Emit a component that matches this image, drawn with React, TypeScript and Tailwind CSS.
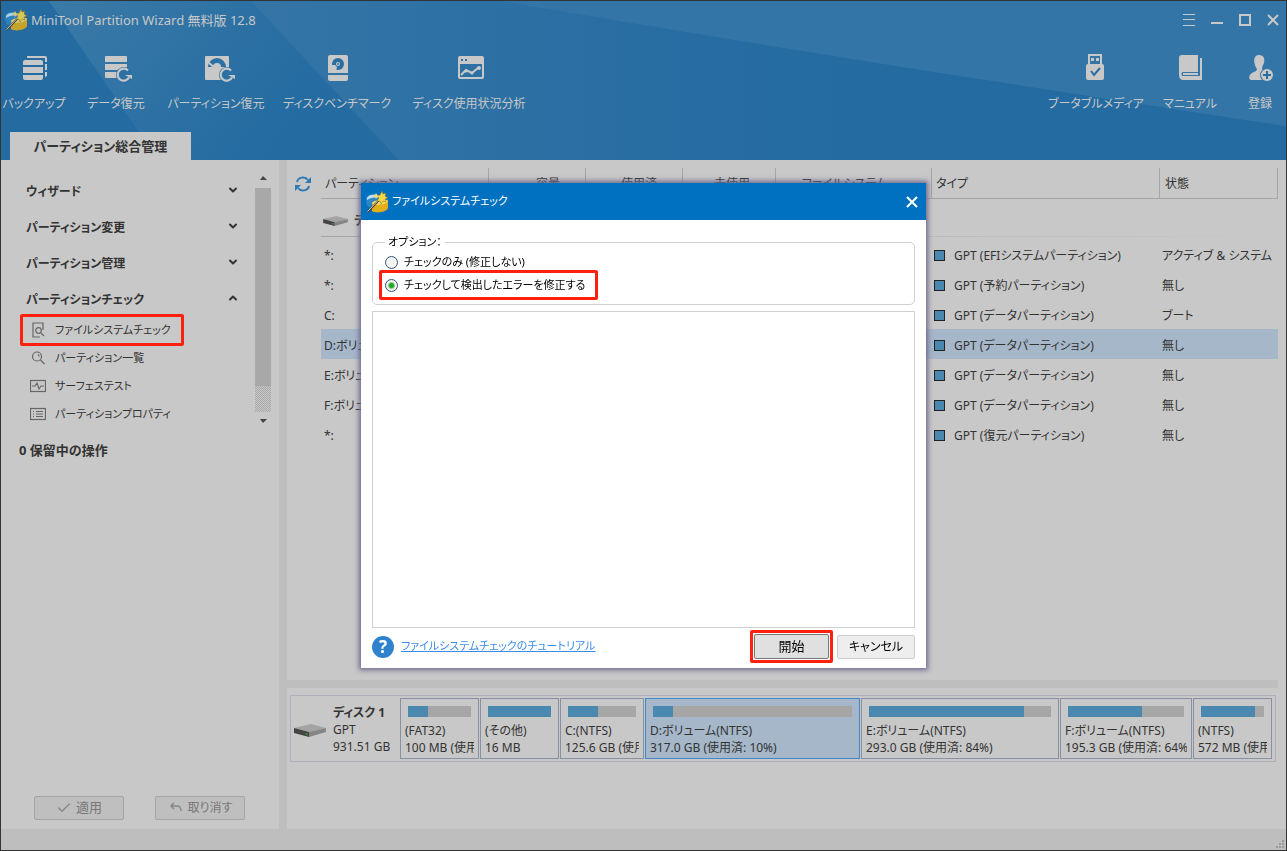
import { useState } from "react";
import type { ReactNode } from "react";
import { Check, ChevronDown, ChevronUp } from "lucide-react";

function AppLogo({ className = "" }: { className?: string }) {
  return (
    <svg viewBox="0 0 22 22" className={`w-[22px] h-[22px] shrink-0 ${className}`}>
      <path d="M0 8c0-4 5-6 11-5l2 3-3 8-7 2C1 15 0 12 0 8z" fill="#2f86c6" />
      <path d="M1 7c1-3 6-4 10-3l1 3C8 6 4 7 1 9z" fill="#c3e2ee" />
      <path d="M6 12c0-2 15-5 16-2v7c-1 4-12 6-16 3z" fill="#e3ae18" />
      <path d="M6 12c2-3 14-5 16-2-1 3-13 6-16 2z" fill="#f6da62" />
      <path d="M1.500 21L13 9" stroke="#4d4433" strokeWidth="2" />
      <path d="M1.500 20.500L12.500 9" stroke="#e6dfc6" strokeWidth="0.900" />
      <path d="M16 0l1 3 3-1-1 3 3 2-3 1 1 3-3-1-2 3-1-3-3 0 2-3-2-2 3-1z" fill="#f7d848" stroke="#8a6c18" strokeWidth="0.500" />
      <path d="M10 2l1 2 2 1-2 1-1 2-1-2-2-1 2-1z" fill="#f3dc74" />
    </svg>
  );
}

function DiskIcon({ className }: { className: string }) {
  return (
    <svg viewBox="0 0 32 13" className={className}>
      <path d="M0 4L17 0l15 4-17 4z" fill="#a3a3a3" />
      <path d="M0 4l15 4v5L0 9z" fill="#444" />
      <path d="M15 8l17-4v4l-17 5z" fill="#858585" />
      <circle cx="12.500" cy="10" r="1" fill="#35b035" />
    </svg>
  );
}

const icons: Record<string, ReactNode> = {
  backup: (
    <>
      <path d="M4 2h18a2 2 0 0 1 2 2v4h-2V4H4zM22 10h2v6h-2zM22 18h2v4l-2 1z" />
      <path d="M2 6h16a2 2 0 0 1 2 2v3H0V8a2 2 0 0 1 2-2zM0 13h20v6H0zM0 21h20v3a2 2 0 0 1-2 2H2a2 2 0 0 1-2-2z" />
    </>
  ),
  data: (
    <>
      <path d="M0 3a1 1 0 0 1 1-1h20a1 1 0 0 1 1 1v5H0zM0 10h22v6H0zM0 18h14v6H1a1 1 0 0 1-1-1z" />
      <circle cx="19" cy="21" r="8" fill="#2c70a4" />
      <path d="M23 16.500a6 6 0 1 0 1 7" fill="none" stroke="currentColor" strokeWidth="2.200" />
      <path d="M20 21h7v4z" />
    </>
  ),
  partition: (
    <>
      <path d="M1 2h22a1 1 0 0 1 1 1v23H1a1 1 0 0 1-1-1V3a1 1 0 0 1 1-1z" />
      <path d="M3 13a9 9 0 0 1 18 0h-5a4 4 0 0 0-8 0z" fill="#2c70a4" />
      <path d="M4 9l6 5" stroke="currentColor" strokeWidth="2" />
      <circle cx="12" cy="12" r="2" />
      <circle cx="22" cy="21" r="8" fill="#2c70a4" />
      <path d="M26 16.500a6 6 0 1 0 1 7" fill="none" stroke="currentColor" strokeWidth="2.200" />
      <path d="M23 21h7v4z" />
    </>
  ),
  benchmark: (
    <>
      <path d="M4 1h16a2 2 0 0 1 2 2v16H2V3a2 2 0 0 1 2-2zM2 21h20v4a2 2 0 0 1-2 2H4a2 2 0 0 1-2-2z" />
      <circle cx="12" cy="10" r="6" fill="#286ea3" />
      <path d="M5 11h4l2 2-1 4H5z" />
      <circle cx="12" cy="10" r="2" />
      <circle cx="12" cy="10" r="0.900" fill="#286ea3" />
    </>
  ),
  usage: (
    <>
      <path fillRule="evenodd" d="M2 2h22a2 2 0 0 1 2 2v19a2 2 0 0 1-2 2H2a2 2 0 0 1-2-2V4a2 2 0 0 1 2-2zM2 10v13h22V10zM3 5v2h2V5zM7 5v2h2V5z" />
      <path d="M3 21l5-5 6 3 7-6" fill="none" stroke="currentColor" strokeWidth="2" />
      <circle cx="8" cy="17" r="1.500" />
      <circle cx="14" cy="19" r="1.500" />
      <circle cx="21" cy="14" r="2" />
    </>
  ),
  usb: (
    <>
      <path fillRule="evenodd" d="M3 0h14v10H3zM5 2v8h10V2zM6 4h3v3H6zM11 4h3v3h-3z" />
      <path d="M3 10h14a2 2 0 0 1 2 2v12a2 2 0 0 1-2 2H3a2 2 0 0 1-2-2V12a2 2 0 0 1 2-2z" />
      <path d="M6 17l3 4 6-7" fill="none" stroke="#286ea3" strokeWidth="2" />
    </>
  ),
  manual: (
    <>
      <path fillRule="evenodd" d="M3 1h16v17H4c-2 0-2 4 0 4h17V4h2v22H4c-2 0-4-2-4-4V4c0-2 1-3 3-3z" />
      <path d="M4 19h15v2H4z" />
    </>
  ),
  register: (
    <>
      <path d="M10 1c5 0 6 4 5 8-1 2-2 4-2 6l2 2c-3 2-3 6-1 9H2c-3-1-2-5 1-7 2-1 5-2 5-4-3-4-5-14 2-14z" />
      <circle cx="18" cy="21" r="7" fill="#3275a7" />
      <circle cx="18" cy="21" r="6" />
      <path d="M14 21h8M18 17v8" stroke="#286ea3" strokeWidth="2" />
    </>
  ),
};

const leftTools = [
  { icon: "backup", label: "バックアップ", width: "w-[58px]" },
  { icon: "data", label: "データ復元", width: "w-[58px]" },
  { icon: "partition", label: "パーティション復元", width: "w-[94px]" },
  { icon: "benchmark", label: "ディスクベンチマーク", width: "w-[100px]" },
  { icon: "usage", label: "ディスク使用状況分析", width: "w-[116px]" },
];

const rightTools = [
  { icon: "usb", label: "ブータブルメディア", width: "w-[90px]" },
  { icon: "manual", label: "マニュアル", width: "w-[50px]" },
  { icon: "register", label: "登録", width: "w-[42px]" },
];

function ToolButton({ icon, label, width }: { icon: string; label: string; width: string }) {
  return (
    <button className={`${width} flex flex-col items-center gap-3 text-[#c8c8c8]`}>
      <svg viewBox="-3 0 28 28" fill="currentColor" className="w-7 h-7 overflow-visible">
        {icons[icon]}
      </svg>
      <span className="text-[12px] leading-5 whitespace-nowrap">{label}</span>
    </button>
  );
}

const windowButtons = [
  { label: "メニュー", d: "M0 0.500h12M0 5.500h12M0 11.500h12", stroke: 1 },
  { label: "最小化", d: "M0 9h12", stroke: 2 },
  { label: "最大化", d: "M1 1h10v10H1z", stroke: 2 },
  { label: "閉じる", d: "M1 1l10 10M11 1L1 11", stroke: 2 },
];

function Header() {
  return (
    <header className="relative bg-[#236ba1] text-[#c8c8c8]">
      <svg viewBox="0 0 1285 160" preserveAspectRatio="none" className="absolute inset-0 w-full h-full">
        <defs>
          <linearGradient id="beam" x1="0" y1="0" x2="1" y2="0.400">
            <stop offset="0" stopColor="#4581aa" stopOpacity="0.700" />
            <stop offset="0.600" stopColor="#3073a5" stopOpacity="0.600" />
            <stop offset="1" stopColor="#236ba1" stopOpacity="0" />
          </linearGradient>
          <linearGradient id="sheet" x1="0" y1="0" x2="1" y2="0">
            <stop offset="0" stopColor="#3c79a8" stopOpacity="0.700" />
            <stop offset="0.500" stopColor="#2d70a4" stopOpacity="0.600" />
            <stop offset="1" stopColor="#236ba1" stopOpacity="0" />
          </linearGradient>
        </defs>
        <path d="M48 0H250L398 160H157Z" fill="url(#beam)" />
        <path d="M250 0H1000L900 160H398Z" fill="url(#sheet)" />
        <path d="M500 0Q850 60 1285 126V0Z" fill="#3375a7" />
      </svg>
      <div className="relative">
        <div className="flex items-center justify-between h-[38px] pl-1 pr-[7px]">
          <div className="flex items-center gap-1">
            <AppLogo className="opacity-85" />
            <h1 className="text-[13px] leading-5">MiniTool Partition Wizard 無料版 12.8</h1>
          </div>
          <div className="flex items-center gap-4">
            {windowButtons.map((b) => (
              <button key={b.label} aria-label={b.label} className="w-3 h-3">
                <svg viewBox="0 0 12 12" fill="none" stroke="currentColor" strokeWidth={b.stroke} className="w-3 h-3"><path d={b.d} /></svg>
              </button>
            ))}
          </div>
        </div>
        <div className="flex justify-between pt-[15px] pl-1 pr-[5px] pb-[18px]">
          <div className="flex gap-6">
            {leftTools.map((t) => <ToolButton key={t.icon} {...t} />)}
          </div>
          <div className="flex gap-6">
            {rightTools.map((t) => <ToolButton key={t.icon} {...t} />)}
          </div>
        </div>
        <div className="pl-[9px]">
          <div className="inline-flex items-center justify-center w-[181px] h-7 pt-[2px] bg-[#c8c8c8] text-[#333] text-[13px] font-bold align-bottom">
            パーティション総合管理
          </div>
        </div>
      </div>
    </header>
  );
}

const sideIcons: Record<string, ReactNode> = {
  fs: (
    <>
      <path d="M13 8V1H3v14h7" />
      <circle cx="8.500" cy="8.500" r="2.800" />
      <path d="M11 11l3 3" />
    </>
  ),
  list: (
    <>
      <circle cx="7" cy="6.500" r="4.500" />
      <path d="M10.500 10l4 4M8 4.500a2 2 0 0 1 1 2" />
    </>
  ),
  surface: (
    <>
      <rect x="0.500" y="2.500" width="15" height="11" />
      <path d="M2 8h3l2-3 2 6 2-3h3" />
    </>
  ),
  props: (
    <>
      <rect x="0.500" y="2.500" width="15" height="11" />
      <path d="M3 5.500h1M6 5.500h7M3 8h1M6 8h7M3 10.500h1M6 10.500h7" />
    </>
  ),
};

const checkItems = [
  { icon: "fs", label: "ファイルシステムチェック", marked: true },
  { icon: "list", label: "パーティション一覧" },
  { icon: "surface", label: "サーフェステスト" },
  { icon: "props", label: "パーティションプロパティ" },
];

function Sidebar() {
  return (
    <aside className="w-[278px] shrink-0 flex flex-col pt-3 pb-[9px] text-[#333]">
      <div className="flex pr-2">
        <nav className="flex-1 pl-[19px]">
          {["ウィザード", "パーティション変更", "パーティション管理", "パーティションチェック"].map((s, i) => (
            <button key={s} className="w-full h-9 flex items-center justify-between pl-[6px] pr-4 text-[12px] font-bold">
              <span className="pt-1">{s}</span>
              {i === 3 ? <ChevronUp className="w-3 h-3" strokeWidth={4} /> : <ChevronDown className="w-3 h-3" strokeWidth={4} />}
            </button>
          ))}
          <ul>
            {checkItems.map((item) => (
              <li key={item.label} className="relative h-7">
                <a href="#" className="h-full flex items-center gap-[9px] pl-[10px] text-[11px]">
                  <svg viewBox="0 0 16 16" fill="none" stroke="#666" strokeWidth="1.200" className="w-4 h-4">{sideIcons[item.icon]}</svg>
                  {item.label}
                </a>
                {item.marked && <span className="absolute left-0 -inset-y-[2px] w-[164px] rounded-[2px] border-3 border-[#ff2010]" />}
              </li>
            ))}
          </ul>
        </nav>
        <div className="w-4 flex flex-col items-center justify-between">
          <svg viewBox="0 0 8 5" className="w-2 h-[5px] mt-[3px]"><path d="M1 5h7L4 1z" fill="#444" /></svg>
          <div className="w-full h-[224px] bg-[repeating-conic-gradient(#a8a8a8_0_25%,#c8c8c8_0_50%)] bg-[length:2px_2px]">
            <div className="w-full h-[198px] bg-[#a8a8a8]" />
          </div>
          <svg viewBox="0 0 8 5" className="w-2 h-[5px] mb-1"><path d="M1 0h7L4 4z" fill="#444" /></svg>
        </div>
      </div>
      <p className="pl-[18px] pt-3 text-[13px] leading-5 font-bold">0 保留中の操作</p>
      <div className="mt-auto flex gap-[31px] pl-[33px] text-[13px] text-[#777]">
        <button className="w-[90px] h-6 flex items-center justify-center gap-1 rounded-[2px] border border-[#a5a5a5] bg-[#bfbfbf]">
          <Check className="w-4 h-4 text-[#888]" strokeWidth={2} />
          適用
        </button>
        <button className="w-[90px] h-6 flex items-center justify-center gap-1 rounded-[2px] border border-[#a5a5a5] bg-[#bfbfbf] text-[12px]">
          <svg viewBox="0 0 16 16" fill="none" stroke="#888" strokeWidth="1.500" className="w-4 h-4"><path d="M6 3L3 6l3 3M3 6h6c3 0 4 2 4 5" /></svg>
          取り消す
        </button>
      </div>
    </aside>
  );
}

const partitions = [
  { name: "*:", type: "GPT (EFIシステムパーティション)", state: "アクティブ & システム" },
  { name: "*:", type: "GPT (予約パーティション)", state: "無し" },
  { name: "C:", type: "GPT (データパーティション)", state: "ブート" },
  { name: "D:ボリューム", type: "GPT (データパーティション)", state: "無し", selected: true },
  { name: "E:ボリューム", type: "GPT (データパーティション)", state: "無し" },
  { name: "F:ボリューム", type: "GPT (データパーティション)", state: "無し" },
  { name: "*:", type: "GPT (復元パーティション)", state: "無し" },
];

function RefreshIcon() {
  return (
    <svg viewBox="0 0 16 16" className="w-4 h-4" fill="none" stroke="#2f7ab4" strokeWidth="2">
      <path d="M2 6c1-5 8-6 11-2M14 10c-1 5-8 6-11 2" />
      <path d="M16 1v6h-6zM0 15V9h6z" fill="#2f7ab4" stroke="none" />
    </svg>
  );
}

function PartitionTable() {
  const th = "relative font-normal align-middle pt-[6px] after:absolute after:right-0 after:top-1 after:bottom-0 after:w-px after:bg-[#a5a5a5]";
  return (
    <div className="flex pl-2 pt-1 text-[#333]">
      <button aria-label="更新" className="w-[26px] h-4 mt-3"><RefreshIcon /></button>
      <table className="flex-1 w-full table-fixed border-collapse text-[12px] leading-5 mr-2">
        <colgroup>
          <col className="w-[168px]" />
          <col className="w-[97px]" />
          <col className="w-[97px]" />
          <col className="w-[93px]" />
          <col className="w-[156px]" />
          <col className="w-[228px]" />
          <col />
        </colgroup>
        <thead>
          <tr className="h-[34px] border-b border-[#a5a5a5]">
            <th className={`${th} text-left pl-1`}>パーティション</th>
            <th className={`${th} text-right pr-[26px]`}>容量</th>
            <th className={`${th} text-right pr-[26px]`}>使用済</th>
            <th className={`${th} text-right pr-[26px]`}>未使用</th>
            <th className={`${th} text-left pl-[26px]`}>ファイルシステム</th>
            <th className={`${th} text-left pl-1`}>タイプ</th>
            <th className={`${th} text-left pl-[5px]`}>状態</th>
          </tr>
        </thead>
        <tbody>
          <tr className="h-[41px]">
            <td colSpan={7} className="relative pl-[2px] pt-1 after:absolute after:inset-x-0 after:bottom-[2px] after:h-px after:bg-linear-to-r after:from-[#a5a5a5] after:to-[#c8c8c8]">
              <span className="flex items-center gap-[6px] font-bold"><DiskIcon className="w-[25px] h-[10px]" />ディスク 1</span>
            </td>
          </tr>
          {partitions.map((p, i) => (
            <tr key={i} className={p.selected ? "h-[30px] bg-[#a5b7c9]" : "h-[30px]"}>
              <td className="pl-[3px] pt-[3px]">{p.name}</td>
              <td /><td /><td /><td />
              <td className="pl-[2px] pt-[3px] whitespace-nowrap">
                <span className="flex items-center gap-[9px]"><i className="w-[11px] h-[11px] border border-[#222] bg-[#4a88b0]" />{p.type}</span>
              </td>
              <td className="pl-[2px] pt-[3px] whitespace-nowrap">{p.state}</td>
            </tr>
          ))}
        </tbody>
      </table>
    </div>
  );
}

const blocks = [
  { name: "(FAT32)", size: "100 MB (使用", used: 32 },
  { name: "(その他)", size: "16 MB", used: 100 },
  { name: "C:(NTFS)", size: "125.6 GB (使用", used: 44 },
  { name: "D:ボリューム(NTFS)", size: "317.0 GB (使用済: 10%)", used: 10, selected: true },
  { name: "E:ボリューム(NTFS)", size: "293.0 GB (使用済: 84%)", used: 85 },
  { name: "F:ボリューム(NTFS)", size: "195.3 GB (使用済: 64%", used: 64 },
  { name: "(NTFS)", size: "572 MB (使用", used: 86 },
];

function DiskMap() {
  return (
    <div className="ml-[3px] mr-[10px] mt-[7px] flex h-[67px] border border-[#adb0b8] text-[12px] leading-[17px] text-[#333]">
      <div className="w-[109px] shrink-0 flex items-center pl-[3px] gap-[7px]">
        <DiskIcon className="w-8 h-[13px] mt-1" />
        <div className="pt-[2px] whitespace-nowrap">
          <p className="font-bold">ディスク 1</p>
          <p>GPT</p>
          <p>931.51 GB</p>
        </div>
      </div>
      <div className="flex-1 min-w-0 grid grid-cols-[79fr_79fr_84fr_215fr_198fr_132fr_79fr] gap-px py-[2px] pr-[3px]">
        {blocks.map((b) => (
          <div
            key={b.name + b.size}
            className={`min-w-0 border px-1 pt-[7px] ${b.selected ? "border-[#4088c8] bg-[#a5b7c9]" : "border-[#8791a3]"}`}
          >
            <div className="mx-[3px] h-[11px] bg-[#a6a6a6]">
              <div className="h-full bg-[#4a88b0]" style={{ width: `${b.used}%` }} />
            </div>
            <p className="mt-[5px] overflow-hidden whitespace-nowrap">{b.name}</p>
            <p className="overflow-hidden whitespace-nowrap">{b.size}</p>
          </div>
        ))}
      </div>
    </div>
  );
}

function CheckDialog() {
  const [mode, setMode] = useState("fix");
  const radio = "appearance-none w-[13px] h-[13px] rounded-full border border-[#2c5578] bg-[#f4f4f0] checked:bg-[radial-gradient(circle,#22a822_0_2px,#f4f4f0_4px)]";
  return (
    <div className="fixed inset-0 flex items-center justify-center">
      <section role="dialog" aria-labelledby="dialog-title" className="w-[565px] bg-white text-black text-[11px] shadow-[0_0_5px_2px_#6c6a8c]">
        <div className="h-[37px] bg-[#0071c1] flex items-center pl-[5px] pr-2 gap-1 text-white">
          <AppLogo />
          <h2 id="dialog-title" className="flex-1">ファイルシステムチェック</h2>
          <button aria-label="閉じる" className="w-3 h-3">
            <svg viewBox="0 0 12 12" fill="none" stroke="currentColor" strokeWidth="2" className="w-3 h-3"><path d="M1 1l10 10M11 1L1 11" /></svg>
          </button>
        </div>
        <div className="px-[11px] pt-[12px] pb-[5px]">
          <fieldset className="h-[73px] rounded-[5px] border border-[#d0d0d0] pl-3 leading-5">
            <legend className="px-[3px] leading-5">オプション：</legend>
            <label className="flex items-center gap-[6px] h-5">
              <input type="radio" name="mode" className={radio} checked={mode === "check"} onChange={() => setMode("check")} />
              チェックのみ (修正しない)
            </label>
            <label className="relative flex items-center gap-[6px] h-[26px]">
              <input type="radio" name="mode" className={radio} checked={mode === "fix"} onChange={() => setMode("fix")} />
              チェックして検出したエラーを修正する
              <span className="absolute -left-[6px] -inset-y-[2px] w-[219px] rounded-[2px] border-3 border-[#ff2010]" />
            </label>
          </fieldset>
          <div className="mt-[6px] h-[317px] border border-[#d0d0d0]" />
          <div className="mt-[2px] flex items-center h-[33px]">
            <span className="w-[22px] h-[22px] rounded-full bg-[#2f82cc] text-white text-[17px] font-bold flex items-center justify-center">?</span>
            <a href="#" className="ml-[7px] flex-1 text-[#3b8de8] underline">ファイルシステムチェックのチュートリアル</a>
            <span className="mr-1 p-px rounded-[2px] border-3 border-[#ff2010] flex">
              <button className="w-[75px] h-[25px] rounded-[2px] border border-[#777] bg-[#e0e0e0] text-[13px]">開始</button>
            </span>
            <button className="w-[78px] h-6 rounded-[2px] border border-[#ccc] bg-[#eee] text-[12px]">キャンセル</button>
          </div>
        </div>
      </section>
    </div>
  );
}

export default function App() {
  return (
    <div className="min-h-screen flex flex-col border border-[#333] bg-[#c8c8c8] font-['Noto_Sans','Noto_Sans_CJK_JP',sans-serif] [font-feature-settings:'palt']">
      <Header />
      <div className="flex-1 flex">
        <Sidebar />
        <div className="w-2 shrink-0 bg-[#bebebe]" />
        <main className="flex-1 min-w-0 flex flex-col">
          <div className="h-[520px]"><PartitionTable /></div>
          <div className="h-2 mr-2 bg-[#bebebe]" />
          <DiskMap />
        </main>
      </div>
      <footer className="h-[21px] bg-[#bebebe] flex items-end justify-end p-[2px]">
        <svg viewBox="0 0 8 8" className="w-2 h-2" fill="#999">
          <path d="M6 0h2v2H6zM3 3h2v2H3zM6 3h2v2H6zM0 6h2v2H0zM3 6h2v2H3zM6 6h2v2H6z" />
        </svg>
      </footer>
      <CheckDialog />
    </div>
  );
}
